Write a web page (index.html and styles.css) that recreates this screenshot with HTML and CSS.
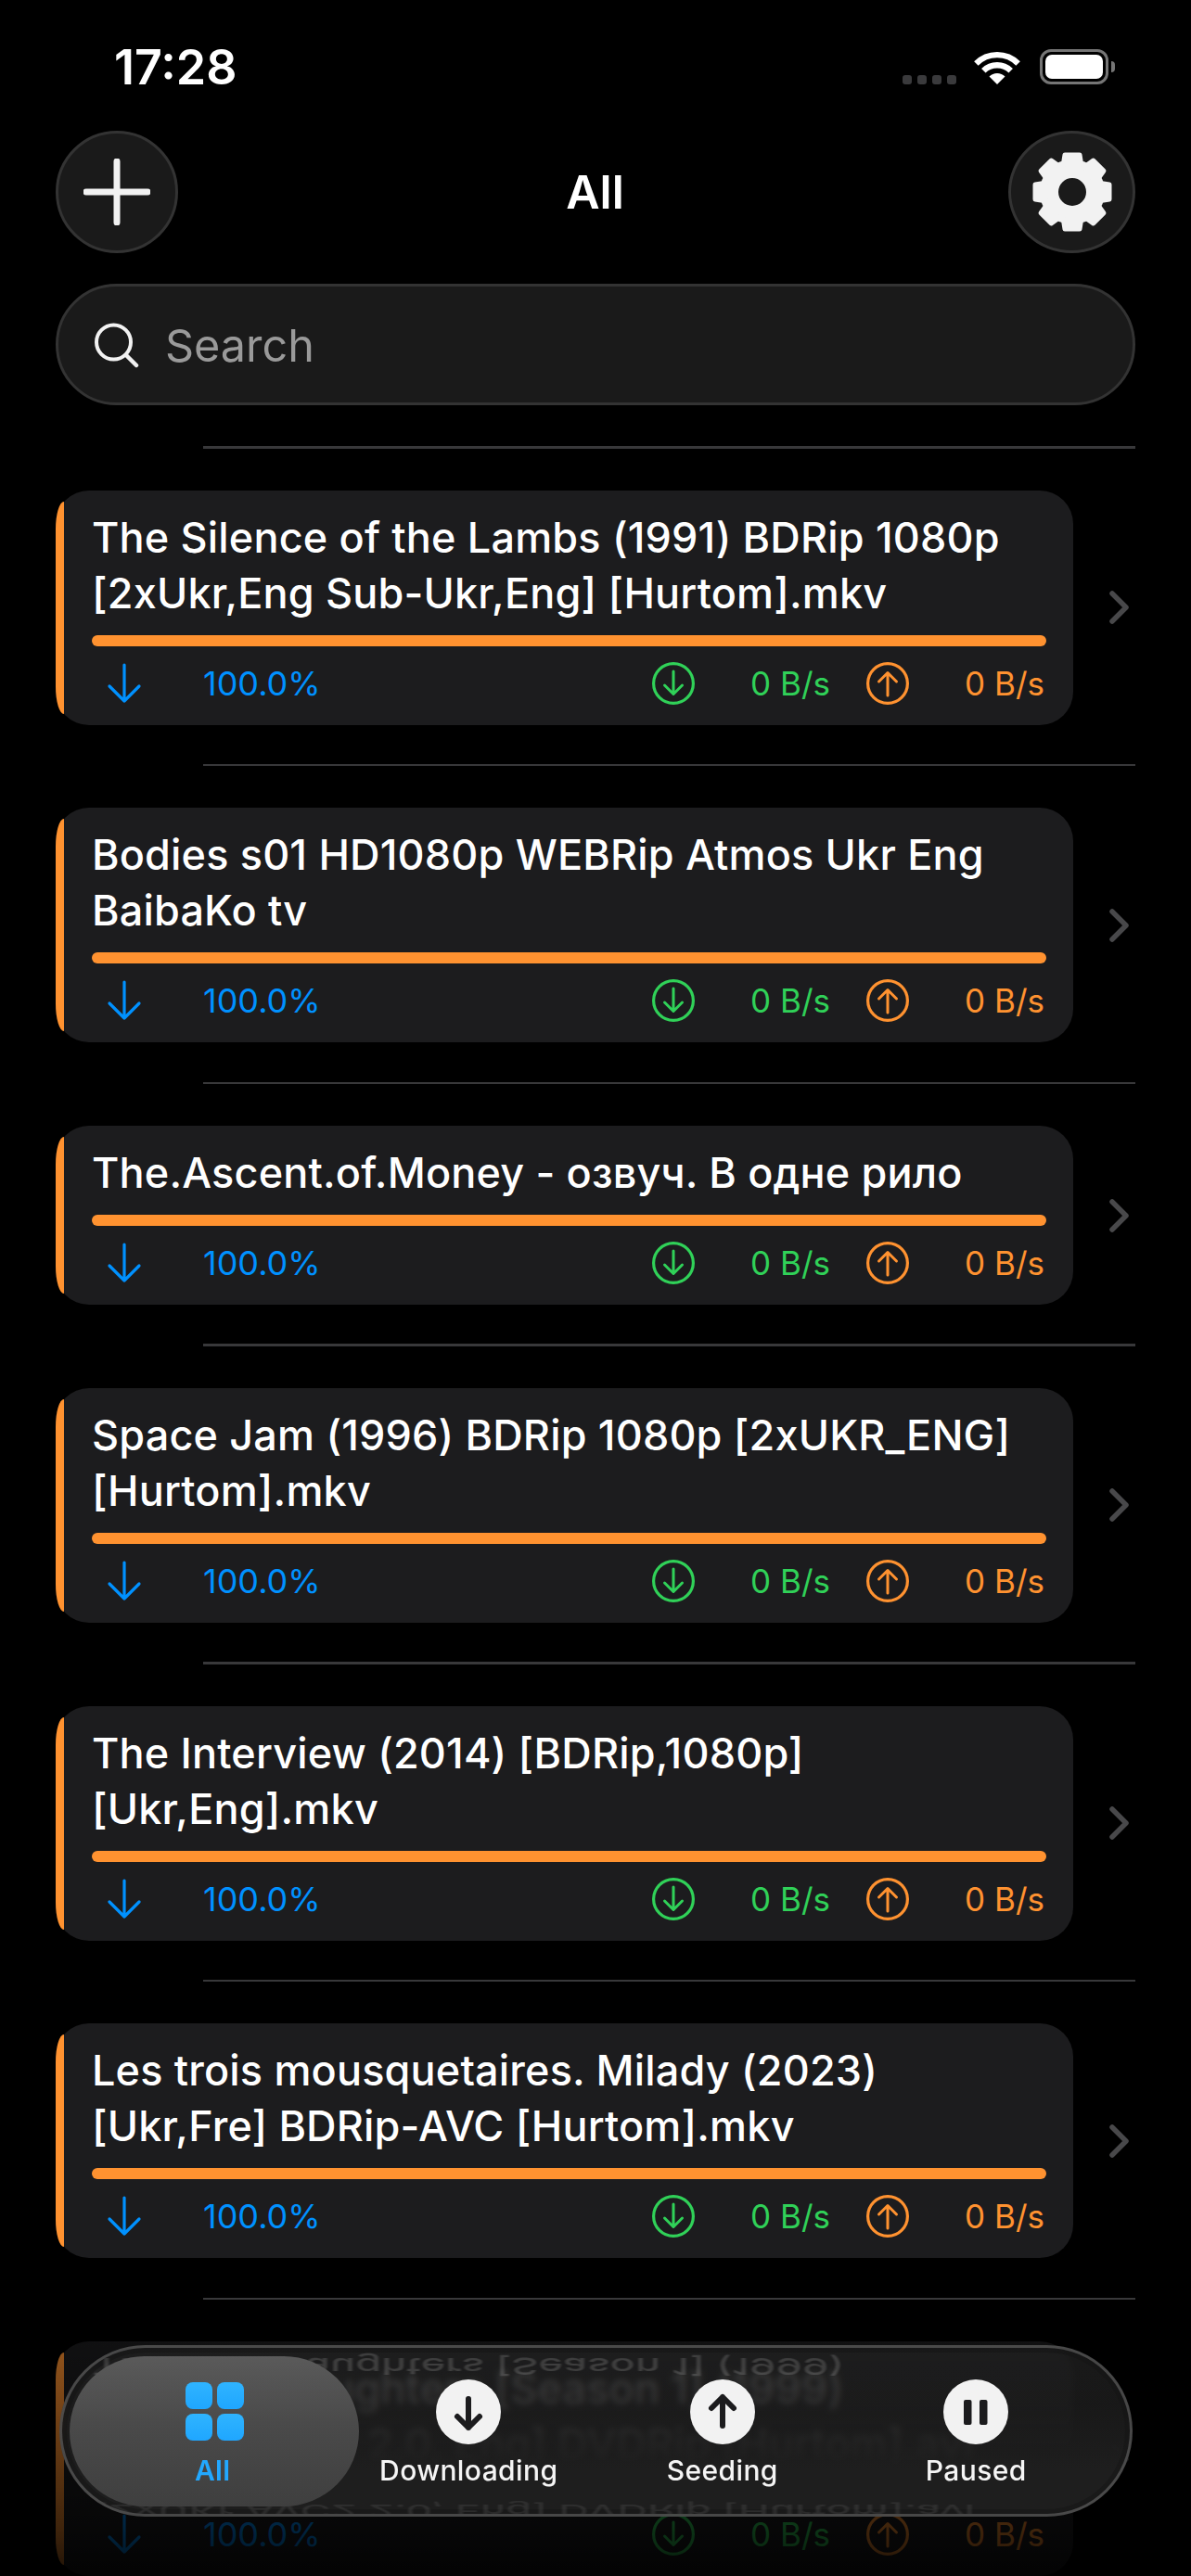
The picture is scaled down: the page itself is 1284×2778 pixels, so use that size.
FILE: index.html
```html
<!DOCTYPE html>
<html lang="en">
<head>
<meta charset="utf-8">
<title>All</title>
<link rel="stylesheet" href="styles.css">
</head>
<body>
<svg class="sprite" aria-hidden="true">
  <defs>
    <symbol id="i-arrow" viewBox="0 0 38 44"><path d="M19 2V41M3 25L19 41L35 25" fill="none" stroke="currentColor" stroke-width="3.2" stroke-linecap="round" stroke-linejoin="round"/></symbol>
    <symbol id="i-down" viewBox="0 0 46 46"><circle cx="23" cy="23" r="21.4" fill="none" stroke="currentColor" stroke-width="3.2"/><path d="M23 10V34M13.5 25L23 34.5L32.5 25" fill="none" stroke="currentColor" stroke-width="3" stroke-linecap="round" stroke-linejoin="round"/></symbol>
    <symbol id="i-up" viewBox="0 0 46 46"><circle cx="23" cy="23" r="21.4" fill="none" stroke="currentColor" stroke-width="3.2"/><path d="M23 36V12M13.5 21L23 11.5L32.5 21" fill="none" stroke="currentColor" stroke-width="3" stroke-linecap="round" stroke-linejoin="round"/></symbol>
    <symbol id="i-chev" viewBox="0 0 21 36"><path d="M3 3L18 18L3 33" fill="none" stroke="currentColor" stroke-width="5.5" stroke-linecap="round" stroke-linejoin="round"/></symbol>
  </defs>
</svg>
<div class="page">
  <div class="status">
    <span class="time">17:28</span>
    <div class="status-right">
      <div class="dots"><i></i><i></i><i></i><i></i></div>
      <svg class="wifi" width="50" height="38" viewBox="0 0 50 38"><path d="M2.4 15.5A32 32 0 0 1 47.6 15.5M10.3 23.2A21 21 0 0 1 39.7 23.2" fill="none" stroke="#fff" stroke-width="6.4"/><path d="M25 38L16.5 29.5A12 12 0 0 1 33.5 29.5Z" fill="#fff"/></svg>
      <div class="battery"><div class="battery-fill"></div></div>
      <div class="battery-nub"></div>
    </div>
  </div>

  <header class="head">
    <button class="round">
      <svg width="72" height="72" viewBox="0 0 72 72"><path d="M36 3V69M3 36H69" fill="none" stroke="#f2f2f2" stroke-width="7" stroke-linecap="round"/></svg>
    </button>
    <h1 class="title">All</h1>
    <button class="round round-wide">
      <svg width="90" height="90" viewBox="0 0 90 90">
        <circle cx="45" cy="45" r="25" fill="none" stroke="#f2f2f2" stroke-width="20"/>
        <g fill="#f2f2f2" stroke="#f2f2f2" stroke-width="5" stroke-linejoin="round">
          <path d="M34 24L37 5H53L56 24Z"/>
          <path d="M34 24L37 5H53L56 24Z" transform="rotate(45 45 45)"/>
          <path d="M34 24L37 5H53L56 24Z" transform="rotate(90 45 45)"/>
          <path d="M34 24L37 5H53L56 24Z" transform="rotate(135 45 45)"/>
          <path d="M34 24L37 5H53L56 24Z" transform="rotate(180 45 45)"/>
          <path d="M34 24L37 5H53L56 24Z" transform="rotate(225 45 45)"/>
          <path d="M34 24L37 5H53L56 24Z" transform="rotate(270 45 45)"/>
          <path d="M34 24L37 5H53L56 24Z" transform="rotate(315 45 45)"/>
        </g>
      </svg>
    </button>
  </header>

  <div class="search">
    <svg width="48" height="50" viewBox="0 0 48 50"><circle cx="20.5" cy="21" r="18.5" fill="none" stroke="#f2f2f2" stroke-width="4"/><path d="M34 35L45 46" fill="none" stroke="#f2f2f2" stroke-width="4.5" stroke-linecap="round"/></svg>
    <span class="search-text">Search</span>
  </div>

  <main class="list">
    <div class="sep"></div>
    <section class="row">
      <article class="card">
        <div class="edge"></div>
        <div class="body">
          <div class="name">The Silence of the Lambs (1991) BDRip 1080p<br>[2xUkr,Eng Sub-Ukr,Eng] [Hurtom].mkv</div>
          <div class="bar"></div>
          <div class="stats">
            <svg class="state"><use href="#i-arrow"/></svg><span class="pct">100.0%</span>
            <svg class="spin dn"><use href="#i-down"/></svg><span class="spd dn">0 B/s</span>
            <svg class="spin up"><use href="#i-up"/></svg><span class="spd up">0 B/s</span>
          </div>
        </div>
      </article>
      <svg class="chev"><use href="#i-chev"/></svg>
    </section>
    <div class="sep"></div>
    <section class="row">
      <article class="card">
        <div class="edge"></div>
        <div class="body">
          <div class="name">Bodies s01 HD1080p WEBRip Atmos Ukr Eng<br>BaibaKo tv</div>
          <div class="bar"></div>
          <div class="stats">
            <svg class="state"><use href="#i-arrow"/></svg><span class="pct">100.0%</span>
            <svg class="spin dn"><use href="#i-down"/></svg><span class="spd dn">0 B/s</span>
            <svg class="spin up"><use href="#i-up"/></svg><span class="spd up">0 B/s</span>
          </div>
        </div>
      </article>
      <svg class="chev"><use href="#i-chev"/></svg>
    </section>
    <div class="sep"></div>
    <section class="row">
      <article class="card">
        <div class="edge"></div>
        <div class="body">
          <div class="name">The.Ascent.of.Money - озвуч. В одне рило</div>
          <div class="bar"></div>
          <div class="stats">
            <svg class="state"><use href="#i-arrow"/></svg><span class="pct">100.0%</span>
            <svg class="spin dn"><use href="#i-down"/></svg><span class="spd dn">0 B/s</span>
            <svg class="spin up"><use href="#i-up"/></svg><span class="spd up">0 B/s</span>
          </div>
        </div>
      </article>
      <svg class="chev"><use href="#i-chev"/></svg>
    </section>
    <div class="sep"></div>
    <section class="row">
      <article class="card">
        <div class="edge"></div>
        <div class="body">
          <div class="name">Space Jam (1996) BDRip 1080p [2xUKR_ENG]<br>[Hurtom].mkv</div>
          <div class="bar"></div>
          <div class="stats">
            <svg class="state"><use href="#i-arrow"/></svg><span class="pct">100.0%</span>
            <svg class="spin dn"><use href="#i-down"/></svg><span class="spd dn">0 B/s</span>
            <svg class="spin up"><use href="#i-up"/></svg><span class="spd up">0 B/s</span>
          </div>
        </div>
      </article>
      <svg class="chev"><use href="#i-chev"/></svg>
    </section>
    <div class="sep"></div>
    <section class="row">
      <article class="card">
        <div class="edge"></div>
        <div class="body">
          <div class="name">The Interview (2014) [BDRip,1080p]<br>[Ukr,Eng].mkv</div>
          <div class="bar"></div>
          <div class="stats">
            <svg class="state"><use href="#i-arrow"/></svg><span class="pct">100.0%</span>
            <svg class="spin dn"><use href="#i-down"/></svg><span class="spd dn">0 B/s</span>
            <svg class="spin up"><use href="#i-up"/></svg><span class="spd up">0 B/s</span>
          </div>
        </div>
      </article>
      <svg class="chev"><use href="#i-chev"/></svg>
    </section>
    <div class="sep"></div>
    <section class="row">
      <article class="card">
        <div class="edge"></div>
        <div class="body">
          <div class="name">Les trois mousquetaires. Milady (2023)<br>[Ukr,Fre] BDRip-AVC [Hurtom].mkv</div>
          <div class="bar"></div>
          <div class="stats">
            <svg class="state"><use href="#i-arrow"/></svg><span class="pct">100.0%</span>
            <svg class="spin dn"><use href="#i-down"/></svg><span class="spd dn">0 B/s</span>
            <svg class="spin up"><use href="#i-up"/></svg><span class="spd up">0 B/s</span>
          </div>
        </div>
      </article>
      <svg class="chev"><use href="#i-chev"/></svg>
    </section>
    <div class="sep"></div>
    <section class="row">
      <article class="card">
        <div class="edge"></div>
        <div class="body">
          <div class="name">The Five Daughters [Season 1] (1999)<br>[2xUKr AVC2 2.0, Eng] DVDRip [Hurtom].avi</div>
          <div class="bar"></div>
          <div class="stats">
            <svg class="state"><use href="#i-arrow"/></svg><span class="pct">100.0%</span>
            <svg class="spin dn"><use href="#i-down"/></svg><span class="spd dn">0 B/s</span>
            <svg class="spin up"><use href="#i-up"/></svg><span class="spd up">0 B/s</span>
          </div>
        </div>
      </article>
      <svg class="chev"><use href="#i-chev"/></svg>
    </section>
  </main>

  <div class="fade"></div>

  <nav class="tabs">
    <div class="refract refract-top" aria-hidden="true">The Five Daughters [Season 1] (1999)</div>
    <div class="refract refract-bottom" aria-hidden="true">[2xUKr AVC2 2.0, Eng] DVDRip [Hurtom].avi</div>
    <div class="pill"></div>
    <div class="tab tab-active">
      <div class="grid-icon"><i></i><i></i><i></i><i></i></div>
      <span class="tab-label">All</span>
    </div>
    <div class="tab">
      <svg class="tab-icon" viewBox="0 0 70 70"><circle cx="35" cy="35" r="35" fill="#f2f2f2"/><path d="M35 21V52M23 40L35 52L47 40" fill="none" stroke="#1c1c1e" stroke-width="6" stroke-linecap="round" stroke-linejoin="round"/></svg>
      <span class="tab-label">Downloading</span>
    </div>
    <div class="tab">
      <svg class="tab-icon" viewBox="0 0 70 70"><circle cx="35" cy="35" r="35" fill="#f2f2f2"/><path d="M35 50V19M23 31L35 19L47 31" fill="none" stroke="#1c1c1e" stroke-width="6" stroke-linecap="round" stroke-linejoin="round"/></svg>
      <span class="tab-label">Seeding</span>
    </div>
    <div class="tab">
      <svg class="tab-icon" viewBox="0 0 70 70"><circle cx="35" cy="35" r="35" fill="#f2f2f2"/><rect x="22" y="22" width="8.5" height="27" rx="2" fill="#1c1c1e"/><rect x="39" y="22" width="8.5" height="27" rx="2" fill="#1c1c1e"/></svg>
      <span class="tab-label">Paused</span>
    </div>
  </nav>
</div>
</body>
</html>
```

FILE: styles.css
```css
* { box-sizing: border-box; }
html, body { margin: 0; padding: 0; background: #000; }
body { font-family: Inter, "Noto Sans", sans-serif; color: #fff; }

.sprite { display: block; width: 0; height: 0; }

.page {
  position: relative;
  width: 1284px;
  height: 2778px;
  overflow: hidden;
  background: #000;
}

/* status bar */
.status {
  height: 141px;
  padding: 43px 82px 0 123px;
  display: flex;
  justify-content: space-between;
  align-items: flex-start;
}
.time { font-size: 52px; line-height: 60px; font-weight: 600; }
.status-right { display: flex; align-items: flex-end; height: 38px; margin-top: 10px; }
.dots { display: flex; gap: 6px; margin-right: 19px; }
.dots i { display: block; width: 10px; height: 10px; border-radius: 3px; background: #3a3a3c; }
.wifi { display: block; margin-right: 21px; }
.battery {
  width: 74px;
  height: 38px;
  border: 3px solid #757575;
  border-radius: 12px;
  padding: 3px;
}
.battery-fill { height: 100%; background: #fff; border-radius: 7px; }
.battery-nub {
  width: 4px;
  height: 12px;
  margin: 0 0 13px 3px;
  border-radius: 0 4px 4px 0;
  background: #757575;
}

/* header */
.head {
  display: flex;
  align-items: center;
  padding: 0 60px;
}
.round {
  flex: none;
  width: 132px;
  height: 132px;
  padding: 0;
  border-radius: 50%;
  background: #1a1a1a;
  border: 3px solid #333;
  display: flex;
  align-items: center;
  justify-content: center;
}
.round-wide { width: 137px; }
.title {
  flex: 1;
  margin: 0;
  padding-left: 4px;
  text-align: center;
  font-size: 50px;
  line-height: 60px;
  font-weight: 600;
}

/* search */
.search {
  margin: 33px 60px 0;
  height: 131px;
  border-radius: 66px;
  background: #1a1a1a;
  border: 3px solid #333;
  display: flex;
  align-items: center;
  padding-left: 39px;
}
.search svg { flex: none; display: block; margin-top: 2px; }
.search-text { margin: 2px 0 0 28px; font-size: 48.5px; line-height: 60px; color: #9a9a9a; }

/* list */
.list { margin-top: 44px; }
.sep {
  height: 2.67px;
  margin: 0 60px 45px 219px;
  background: #38383a;
}
.row {
  display: flex;
  align-items: center;
  padding-left: 60px;
  margin-bottom: 42.1px;
}
.card {
  flex: none;
  width: 1097px;
  display: flex;
  align-items: stretch;
  background: #1c1c1e;
  border-radius: 36px;
}
.edge {
  flex: none;
  width: 9px;
  margin: 12px 0;
  background: #ff9230;
  border-radius: 9px 0 0 9px / 30px 0 0 30px;
}
.body { flex: 1; padding: 21px 29px 22px 30px; min-width: 0; }
.name { font-size: 45px; line-height: 60px; font-weight: 500; letter-spacing: .17px; color: #fff; white-space: nowrap; }
.bar { height: 12px; margin-top: 15px; border-radius: 6px; background: #ff9230; }
.stats { display: flex; align-items: center; height: 46px; margin: 17px 2px 0 0; }
.state { flex: none; width: 38px; height: 44px; margin-left: 16px; color: #0091ff; }
.pct { flex: 1; margin-left: 66px; font-size: 36px; line-height: 46px; color: #0091ff; }
.spin { flex: none; width: 46px; height: 46px; }
.spd { flex: none; width: 146px; text-align: right; font-size: 35px; line-height: 46px; }
.spin.up { margin-left: 39px; }
.dn { color: #30d158; }
.up { color: #ff9230; }
.chev { flex: none; width: 21px; height: 36px; margin-left: 39px; color: #48484a; }

/* bottom fade */
.fade {
  position: absolute;
  left: 0;
  right: 0;
  bottom: 0;
  height: 300px;
  background: linear-gradient(to bottom, rgba(0,0,0,0) 0, rgba(0,0,0,.42) 48px, rgba(0,0,0,.76) 252px, rgba(0,0,0,.88) 300px);
}

/* tab bar */
.tabs {
  position: absolute;
  left: 64px;
  top: 2529px;
  width: 1157px;
  height: 185px;
  border-radius: 93px;
  border: 3px solid rgba(110,110,110,.55);
  box-shadow: inset 0 0 0 5px rgba(20,20,20,.5);
  background: linear-gradient(to bottom, rgba(34,34,34,.74) 0, rgba(32,32,32,.76) 60px, rgba(30,30,30,.9) 100px, rgba(30,30,30,1) 130px);
  -webkit-backdrop-filter: blur(3.5px);
  backdrop-filter: blur(3.5px);
  overflow: hidden;
  display: grid;
  grid-template-columns: repeat(4, 273.5px);
  padding-left: 28px;
}
.refract {
  position: absolute;
  left: 33px;
  font-size: 45px;
  letter-spacing: .17px;
  line-height: 40px;
  height: 40px;
  font-weight: 500;
  white-space: nowrap;
  color: rgba(255,255,255,.15);
  filter: blur(.8px);
}
.refract-top { top: 0; transform: scaleY(-.55); }
.refract-bottom { top: 155px; transform: scaleY(-.4); color: rgba(255,255,255,.08); }
.pill {
  position: absolute;
  left: 8px;
  top: 9px;
  width: 312px;
  height: 162px;
  border-radius: 81px;
  background: linear-gradient(to bottom, #5a5a5a, #4a4a4a 45%, #3f3f3f);
}
.tab {
  position: relative;
  display: flex;
  flex-direction: column;
  align-items: center;
  padding-top: 34px;
}
.tab-icon { display: block; width: 70px; height: 70px; }
.tab-label { margin-top: 10px; font-size: 30px; line-height: 36px; font-weight: 500; letter-spacing: .4px; color: #f5f5f5; white-space: nowrap; }
.tab-active { padding-top: 37px; }
.tab-active .tab-label { margin-top: 14px; padding-right: 5px; color: #22a8ff; font-weight: 600; }
.grid-icon {
  display: grid;
  grid-template-columns: 29px 29px;
  grid-auto-rows: 29px;
  gap: 5px;
}
.grid-icon i { display: block; border-radius: 8px; background: linear-gradient(to bottom, #2fb4ff, #1fa6ff); }
```
